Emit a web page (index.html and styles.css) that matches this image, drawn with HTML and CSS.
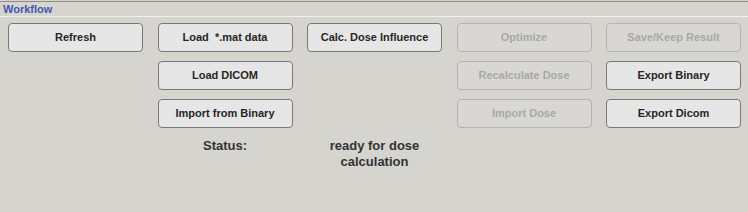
FILE: index.html
```html
<!DOCTYPE html>
<html lang="en">
<head>
  <meta charset="UTF-8">
  <title>Workflow</title>
  <link rel="stylesheet" href="styles.css">
</head>
<body>
  <div class="panel">
    <div class="panel-title">Workflow</div>
    <div class="panel-body">
      <div class="grid">
        <button class="btn">Refresh</button>
        <button class="btn">Load&nbsp; *.mat data</button>
        <button class="btn">Calc. Dose Influence</button>
        <button class="btn" disabled>Optimize</button>
        <button class="btn" disabled>Save/Keep Result</button>

        <div class="empty"></div>
        <button class="btn">Load DICOM</button>
        <div class="empty"></div>
        <button class="btn" disabled>Recalculate Dose</button>
        <button class="btn">Export Binary</button>

        <div class="empty"></div>
        <button class="btn">Import from Binary</button>
        <div class="empty"></div>
        <button class="btn" disabled>Import Dose</button>
        <button class="btn">Export Dicom</button>

        <div class="empty"></div>
        <div class="status">Status:</div>
        <div class="status">ready for dose calculation</div>
      </div>
    </div>
  </div>
</body>
</html>
```

FILE: styles.css
```css
/* General Styles */
* {
  box-sizing: border-box;
  margin: 0;
  padding: 0;
}

body {
  font-family: "Liberation Sans", Arial, sans-serif;
  background-color: #d5d4cf;
  width: 748px;
  height: 212px;
  overflow: hidden;
}

/* Panel */
.panel {
  height: 212px;
  border-top: 1px solid #8e8d89;
  border-bottom: 1px solid #f2f2f0;
  margin-top: 1px;
  display: flex;
  flex-direction: column;
}

.panel-title {
  color: #4258b0;
  font-size: 11px;
  font-weight: bold;
  padding: 1px 0 0 3px;
  height: 15px;
  border-bottom: 1px solid #f0f0ee;
}

.panel-body {
  padding: 6px 0 0 8px;
}

/* Button grid */
.grid {
  display: grid;
  grid-template-columns: repeat(5, 135px);
  grid-auto-rows: 29px;
  column-gap: 14.5px;
  row-gap: 9px;
}

.btn {
  font-family: "Liberation Sans", Arial, sans-serif;
  font-size: 11px;
  font-weight: bold;
  color: #262626;
  background: #e6e6e6;
  border: 1px solid #787878;
  border-radius: 4px;
  padding-bottom: 1px;
}

.btn:disabled {
  color: #a8a8a8;
  background: #d8d7d3;
  border-color: #b4b3af;
}

.status {
  font-size: 13px;
  font-weight: bold;
  color: #333;
  text-align: center;
  line-height: 16px;
  margin-top: 1px;
}
```
